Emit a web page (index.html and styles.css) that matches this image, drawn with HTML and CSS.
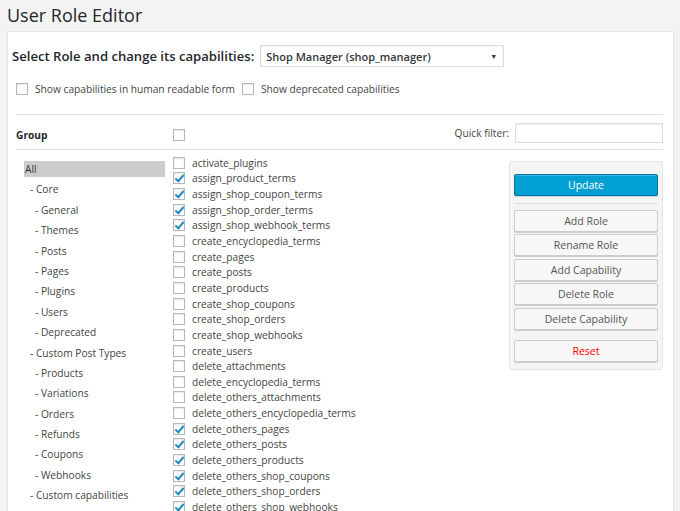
FILE: index.html
```html
<!DOCTYPE html>
<html>
<head>
<meta charset="utf-8">
<link rel="stylesheet" href="styles.css">
</head>
<body>
<h1 class="title">User Role Editor</h1>
<div class="panel">
  <div class="role-row">
    <span class="role-label">Select Role and change its capabilities:</span>
    <div class="select"><span>Shop Manager (shop_manager)</span><span class="arrow">▼</span></div>
  </div>
  <div class="opts">
    <label class="opt"><span class="cb"></span>Show capabilities in human readable form</label>
    <label class="opt"><span class="cb"></span>Show deprecated capabilities</label>
  </div>
  <div class="head-row">
    <span class="group-label">Group</span>
    <span class="cb head-cb"></span>
    <span class="spacer"></span>
    <span class="qf-label">Quick filter:</span>
    <span class="qf-input"></span>
  </div>
  <div class="main">
    <ul class="groups">
      <li class="g0 active">All</li>
      <li class="g1">- Core</li>
      <li class="g2">- General</li>
      <li class="g2">- Themes</li>
      <li class="g2">- Posts</li>
      <li class="g2">- Pages</li>
      <li class="g2">- Plugins</li>
      <li class="g2">- Users</li>
      <li class="g2">- Deprecated</li>
      <li class="g1">- Custom Post Types</li>
      <li class="g2">- Products</li>
      <li class="g2">- Variations</li>
      <li class="g2">- Orders</li>
      <li class="g2">- Refunds</li>
      <li class="g2">- Coupons</li>
      <li class="g2">- Webhooks</li>
      <li class="g1">- Custom capabilities</li>
    </ul>
    <ul class="caps">
      <li><span class="cb"></span>activate_plugins</li>
      <li><span class="cb on"></span>assign_product_terms</li>
      <li><span class="cb on"></span>assign_shop_coupon_terms</li>
      <li><span class="cb on"></span>assign_shop_order_terms</li>
      <li><span class="cb on"></span>assign_shop_webhook_terms</li>
      <li><span class="cb"></span>create_encyclopedia_terms</li>
      <li><span class="cb"></span>create_pages</li>
      <li><span class="cb"></span>create_posts</li>
      <li><span class="cb"></span>create_products</li>
      <li><span class="cb"></span>create_shop_coupons</li>
      <li><span class="cb"></span>create_shop_orders</li>
      <li><span class="cb"></span>create_shop_webhooks</li>
      <li><span class="cb"></span>create_users</li>
      <li><span class="cb"></span>delete_attachments</li>
      <li><span class="cb"></span>delete_encyclopedia_terms</li>
      <li><span class="cb"></span>delete_others_attachments</li>
      <li><span class="cb"></span>delete_others_encyclopedia_terms</li>
      <li><span class="cb on"></span>delete_others_pages</li>
      <li><span class="cb on"></span>delete_others_posts</li>
      <li><span class="cb on"></span>delete_others_products</li>
      <li><span class="cb on"></span>delete_others_shop_coupons</li>
      <li><span class="cb on"></span>delete_others_shop_orders</li>
      <li><span class="cb on"></span>delete_others_shop_webhooks</li>
    </ul>
    <div class="actions">
      <button class="btn primary">Update</button>
      <div class="sep"></div>
      <button class="btn">Add Role</button>
      <button class="btn">Rename Role</button>
      <button class="btn">Add Capability</button>
      <button class="btn">Delete Role</button>
      <button class="btn">Delete Capability</button>
      <button class="btn reset">Reset</button>
    </div>
  </div>
</div>
</body>
</html>
```
FILE: styles.css
```css
html, body {
  margin: 0;
  padding: 0;
  background: #f3f3f3;
  height: 511px;
  overflow: hidden;
}
body {
  font-family: "Open Sans", sans-serif;
  color: #444;
  font-size: 10.2px;
}
.title {
  margin: 0;
  padding: 2px 0 0 7px;
  height: 29px;
  font-size: 18px;
  font-weight: 400;
  color: #23282d;
  line-height: 26px;
}
.panel {
  margin-left: 7px;
  width: 667px;
  height: 500px;
  background: #fff;
  border: 1px solid #e5e5e5;
  border-bottom: none;
  box-sizing: border-box;
  padding: 0 10px 0 8px;
}
.role-row {
  display: flex;
  align-items: center;
  padding-top: 13px;
  height: 22px;
  margin-left: -4px;
}
.role-label {
  font-size: 13.1px;
  font-weight: 600;
  color: #23282d;
  margin-right: 6px;
}
.select {
  width: 244px;
  height: 22px;
  box-sizing: border-box;
  border: 1px solid #ddd;
  display: flex;
  align-items: center;
  justify-content: space-between;
  padding: 0 6px 0 5px;
  font-size: 11px;
  font-weight: 600;
  color: #32373c;
  box-shadow: inset 0 1px 2px rgba(0,0,0,.05);
}
.arrow {
  font-size: 7px;
  color: #333;
}
.opts {
  display: flex;
  align-items: center;
  margin-top: 14px;
  height: 16px;
}
.opt {
  display: flex;
  align-items: center;
  color: #444;
}
.opt .cb { margin-right: 7px; }
.opt + .opt { margin-left: 7px; }
.cb {
  display: inline-block;
  width: 12px;
  height: 12px;
  border: 1px solid #b4b9be;
  box-sizing: border-box;
  background: #fff;
  box-shadow: inset 0 1px 2px rgba(0,0,0,.1);
  position: relative;
  flex: none;
}
.cb.on::after {
  content: "";
  position: absolute;
  left: 3px;
  top: 0px;
  width: 3px;
  height: 7px;
  border: solid #1e8cbe;
  border-width: 0 2px 2px 0;
  transform: rotate(40deg);
}
.head-row {
  margin-top: 17px;
  border-top: 1px solid #ddd;
  border-bottom: 1px solid #ddd;
  height: 34px;
  display: flex;
  align-items: center;
}
.group-label {
  font-weight: 700;
  width: 157px;
  color: #23282d;
  position: relative;
  top: 3px;
}
.head-cb { position: relative; top: 3px; }
.spacer { flex: 1; }
.qf-label { margin-right: 6px; color: #444; position: relative; top: 1px; }
.qf-input {
  width: 148px;
  height: 20px;
  box-sizing: border-box;
  border: 1px solid #ddd;
  box-shadow: inset 0 1px 2px rgba(0,0,0,.07);
  position: relative;
  top: 1px;
}
.main {
  display: flex;
  align-items: flex-start;
  padding-top: 3px;
}
ul { list-style: none; margin: 0; padding: 0; }
.groups {
  width: 141px;
  margin-left: 8px;
  margin-right: 8px;
  margin-top: 8px;
}
.groups li {
  height: 20.4px;
  line-height: 16px;
  box-sizing: border-box;
}
.groups li.active { background: #ccc; height: 16px; margin-bottom: 4.4px; padding-left: 1px; color: #333; }
.g1 { padding-left: 6px; }
.g2 { padding-left: 11px; }
.caps {
  width: 336px;
  margin-top: 2px;
}
.caps li {
  height: 15.65px;
  display: flex;
  align-items: center;
  white-space: nowrap;
}
.caps .cb { margin-right: 7px; }
.actions {
  width: 154px;
  box-sizing: border-box;
  margin-top: 8px;
  background: #f5f5f5;
  border: 1px solid #e5e5e5;
  border-radius: 3px;
  padding: 12px 4px 5px 4px;
  display: flex;
  flex-direction: column;
}
.btn {
  font-family: "Open Sans", sans-serif;
  font-size: 10.5px;
  height: 22px;
  margin: 0 0 2.4px 0;
  border: 1px solid #ccc;
  border-radius: 2px;
  background: #f7f7f7;
  box-shadow: 0 1px 0 #ccc;
  color: #555;
  padding: 0;
  line-height: 18px;
}
.btn.primary {
  background: #00a0d2;
  border-color: #0073aa;
  color: #fff;
  box-shadow: inset 0 1px 0 rgba(120,200,230,.5), 0 1px 0 rgba(0,0,0,.15);
  margin-bottom: 7px;
}
.sep {
  border-top: 1px solid #ddd;
  margin-bottom: 6px;
}
.btn.reset {
  color: #f00;
  margin-top: 8px;
}
```
